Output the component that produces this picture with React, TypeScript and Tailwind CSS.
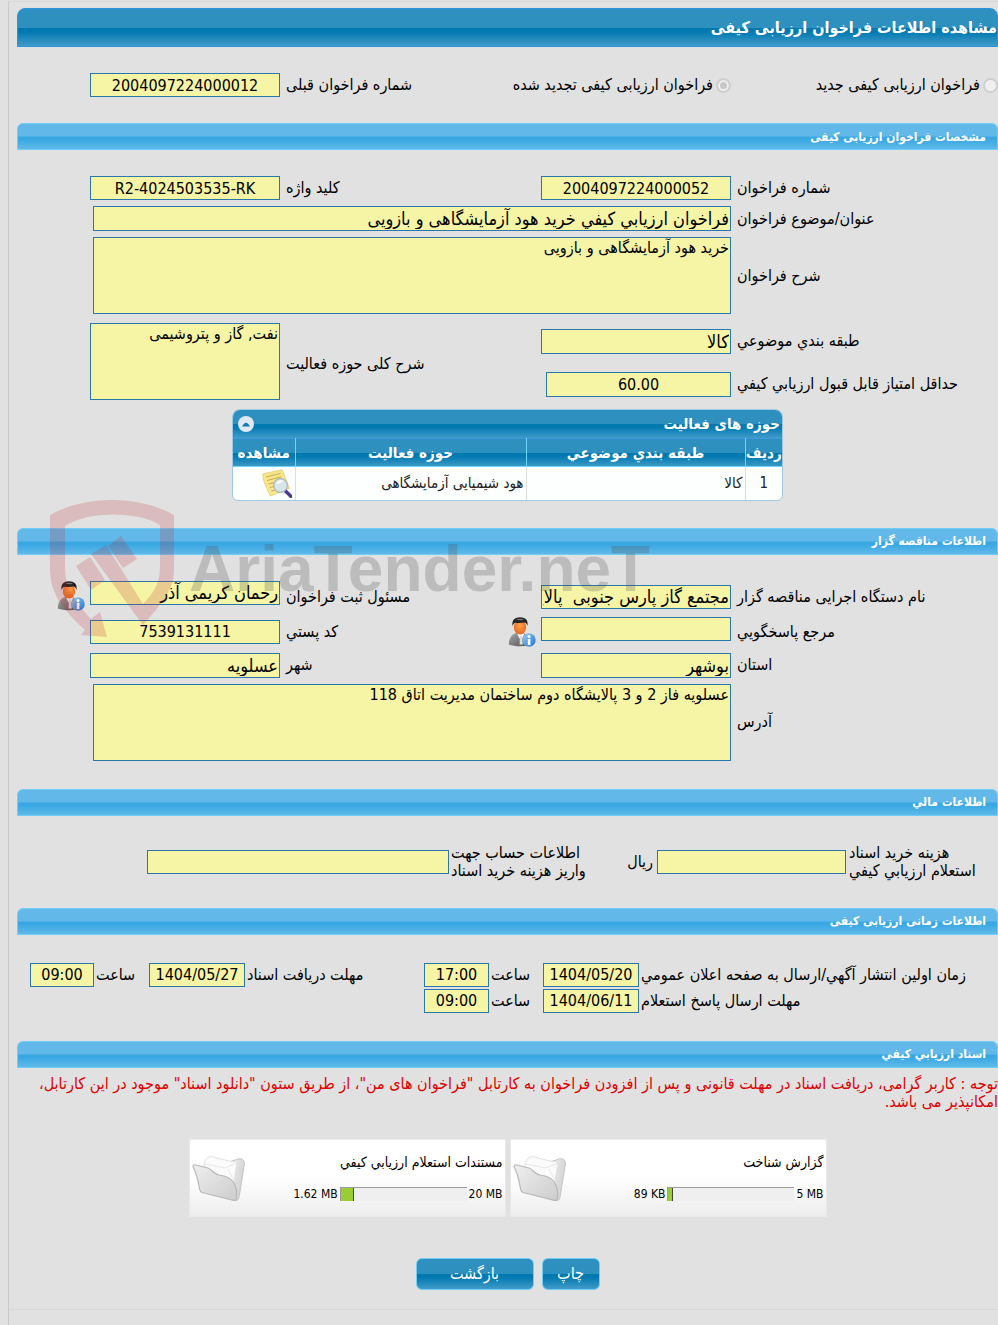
import { useId } from "react";
import type { ReactNode } from "react";

const FIELD =
  "block border border-[#2a78aa] bg-[#f6f4a5] px-px text-black outline-none";
const FORM_GRID =
  "grid grid-cols-[minmax(0,267fr)_190px_minmax(0,261fr)_190px_minmax(0,73fr)]";
const TIME_GRID =
  "grid grid-cols-[minmax(0,359fr)_96px_54px_65px_minmax(0,179fr)_96px_55px_64px_minmax(0,13fr)] items-center";
const DARK =
  "bg-[linear-gradient(#2e90bf_0%,#2e90bf_50%,#0078b0_51%,#0078b0_60%,#419bc7_100%)]";

function Field({
  id,
  value = "",
  center = false,
  tall = false,
  className = "",
}: {
  id: string;
  value?: string;
  center?: boolean;
  tall?: boolean;
  className?: string;
}) {
  return (
    <input
      id={id}
      readOnly
      defaultValue={value}
      className={`${FIELD} w-full leading-5 ${tall ? "h-[25px]" : "h-6"} ${center ? "text-center text-base" : "text-right text-lg"} ${className}`}
    />
  );
}

function Area({ id, value, className = "" }: { id: string; value: string; className?: string }) {
  return (
    <textarea
      id={id}
      readOnly
      defaultValue={value}
      className={`${FIELD} h-[77px] resize-none text-right text-base leading-5 ${className}`}
    />
  );
}

function Label({
  id,
  children,
  tight = false,
  className = "",
}: {
  id: string;
  children: ReactNode;
  tight?: boolean;
  className?: string;
}) {
  return (
    <label
      htmlFor={id}
      className={`block whitespace-nowrap text-left ${tight ? "pl-0.5" : "pl-1.5"} ${className}`}
    >
      {children}
    </label>
  );
}

function SectionBar({ children }: { children: ReactNode }) {
  return (
    <h2 className="flex h-[27px] items-center rounded-t-md border border-[#6fcdf6] bg-[linear-gradient(#62b9e9_0%,#62b9e9_48%,#38a7e2_52%,#38a7e2_60%,#60b9e9_100%)] pr-[11px] text-xs font-bold text-white">
      {children}
    </h2>
  );
}

function PersonIcon() {
  const g = useId();
  return (
    <svg viewBox="0 0 28 30" className="h-[30px] w-7 shrink-0" aria-hidden="true">
      <defs>
        <linearGradient id={`${g}s`} x1="0" y1="0" x2="1" y2="1">
          <stop offset="0" stopColor="#a5a5a5" />
          <stop offset="1" stopColor="#555" />
        </linearGradient>
        <radialGradient id={`${g}f`} cx="0.5" cy="0.4" r="0.6">
          <stop offset="0" stopColor="#ffa04d" />
          <stop offset="1" stopColor="#e56a1c" />
        </radialGradient>
        <linearGradient id={`${g}b`} x1="0" y1="0" x2="1" y2="1">
          <stop offset="0" stopColor="#9fd0f5" />
          <stop offset="1" stopColor="#1672cf" />
        </linearGradient>
      </defs>
      <path d="M.8 27.5C1 21 4 17 8.500 16h7c3 1 4.500 4 4.800 8v4.500c-6 1.200-14 1.200-19.500-1z" fill={`url(#${g}s)`} />
      <path d="M9 16.500l4 7.500 3.500-7.500z" fill="#fff" />
      <path d="M12 18.500h2l.8 9h-3.200z" fill="#ddd" />
      <ellipse cx="12" cy="10" rx="6.200" ry="7.500" fill={`url(#${g}f)`} />
      <path d="M4.500 9C3.600 3 7 .3 12 .3c5.200 0 8.500 2.700 7.500 8.700-.8-2.500-2-3.500-3.500-3.400-3 .5-6 .5-8.300.2C6 6 5.300 7 4.500 9z" fill="#242424" />
      <path d="M8 2.600c2.500-1.200 6-1 7.800.2-2.500.8-5.500.7-7.800-.2z" fill="#777" />
      <circle cx="21" cy="23" r="6.700" fill={`url(#${g}b)`} />
      <circle cx="21" cy="19.400" r="1.500" fill="#fff" />
      <path d="M19.800 21.900h2.600v6.200h-2.600z" fill="#fff" />
    </svg>
  );
}

function NoteSearchIcon() {
  return (
    <svg viewBox="0 0 30 29" className="h-[29px] w-[30px]" aria-hidden="true">
      <path d="M.8 5L20 .8l7.500 18.500L8.500 27C5 20 1 13 .8 5z" fill="#f7e68b" stroke="#e0cb6a" strokeWidth=".8" />
      <path d="M4 8l14.500-3.500M5 11.500l14.500-3.700M6.500 15l8-2M8 18.500l5-1.200M9.500 22l6-1.500" stroke="#c9b055" strokeWidth="1.100" fill="none" />
      <path d="M23.500 22l5.500 5.500" stroke="#4a3a94" strokeWidth="3.400" strokeLinecap="round" />
      <circle cx="18.500" cy="16.500" r="6.800" fill="#d5e6f2" fillOpacity=".9" stroke="#a9b6c4" strokeWidth="1.200" />
      <path d="M14 15c1-3 4-4.500 7-3.500-1 2-4 3.500-7 3.500z" fill="#fff" />
    </svg>
  );
}

function FolderIcon() {
  const g = useId();
  return (
    <svg viewBox="0 0 54 48" className="h-12 w-[54px] shrink-0" aria-hidden="true">
      <defs>
        <linearGradient id={`${g}a`} x1="0" y1="0" x2="1" y2="1">
          <stop offset="0" stopColor="#efefef" />
          <stop offset="1" stopColor="#cccccc" />
        </linearGradient>
        <linearGradient id={`${g}c`} x1="0" y1="0" x2="1" y2="0.400">
          <stop offset="0" stopColor="#fafafa" />
          <stop offset="1" stopColor="#d2d2d2" />
        </linearGradient>
      </defs>
      <path d="M34 9l12-4c4-1 6.500 1 6.500 4.500l-5.500 34c-.5 2.500-2 3.500-4 3L32 42z" fill={`url(#${g}c)`} stroke="#c6c6c6" />
      <path d="M12 13c0-5 2-9 5-10 3-1 5 0 8 1l12 3 8 1-4 26-24-4z" fill="#fbfbfb" stroke="#e2e2e2" />
      <path d="M13 10l20 4 12-5M36 15l6 12" stroke="#e8e8e8" fill="none" />
      <path d="M1 12.500c0-1.500 1-2 3-1.500l12 3c3 1 6 6 11 7 9 1 14 4 16.500 11 1.500 5 1.300 10 1 12.500-.3 1.500-1.500 2.300-3 1.800L10 38.500c-1.500-.6-2-1.500-2.300-3C6 26 5 20 1 12.500z" fill={`url(#${g}a)`} stroke="#b8b8b8" strokeWidth="1.200" />
    </svg>
  );
}

function Watermark() {
  return (
    <div dir="ltr" aria-hidden="true" className="pointer-events-none absolute left-[50px] top-[499px] flex">
      <svg viewBox="50 499 125 139" className="h-[139px] w-[125px] shrink-0" fill="#c02834" fillOpacity=".2">
        <path d="M50 515C85 495 139 495 174 515V568C174 586 168 597 143 625L91 554 106 545 143 604C156 590 160 582 160 566V525C137 511 88 511 65 526V567C65 586 72 598 91 619L100 612 107 637 81 635 85 630C58 605 50 590 50 568Z" />
        <path d="M76 566L90 557 105 580 91 590ZM108 546L121 536 137 559 123 568Z" />
      </svg>
      <span className="whitespace-nowrap pl-3.5 pt-5 font-['Liberation_Sans',sans-serif] text-[64px] font-bold leading-[100px] text-[#505050]/25">
        AriaTender.neT
      </span>
    </div>
  );
}

function FileCard({ title, max, used, level }: { title: string; max: string; used: string; level: number }) {
  return (
    <article className="flex h-[78px] w-[317px] items-start justify-between border border-[#e8e8e8] bg-[linear-gradient(#fff_50%,#ededed_100%)] px-0.5 text-xs text-black">
      <div className="pt-3">
        <h3 className="text-sm leading-5">{title}</h3>
        <div className="flex items-center gap-0.5 pt-3 leading-5">
          <span dir="ltr">{max}</span>
          <div dir="ltr" className="h-3.5 w-[127px] border-l border-t border-[#9a9a9a] bg-[#efefef]">
            <div className="h-full border-r border-[#444] bg-[#9acd32]" style={{ width: level }} />
          </div>
          <span dir="ltr">{used}</span>
        </div>
      </div>
      <div className="pt-3.5">
        <FolderIcon />
      </div>
    </article>
  );
}

function ActionButton({ children, className }: { children: ReactNode; className: string }) {
  return (
    <button type="button" className={`h-8 rounded-md border border-[#6fcdf6] text-base leading-5 text-white ${DARK} ${className}`}>
      {children}
    </button>
  );
}

export default function App() {
  const th = "border-l border-[#6fd6ff] p-0 text-center font-bold";
  const td = "border-l border-[#dedede] px-0.5 py-0";
  return (
    <div
      dir="rtl"
      className="relative min-h-screen overflow-x-hidden bg-[#e1e1e1] pl-2 pt-px font-['DejaVu_Sans_Condensed','DejaVu_Sans',sans-serif] text-base leading-[18px] text-black"
    >
      <div className="min-h-[1324px] border-l border-t border-l-[#c9c9c9] border-t-[#d9d9d9]">
        <main className="border-b border-[#d8d8d8] pb-[19px] pl-2 pt-1.5">
          <h1 className={`flex h-[39px] items-center rounded-t-lg border border-[#2b93e0] text-base font-bold text-white ${DARK}`}>
            مشاهده اطلاعات فراخوان ارزیابی کیفی
          </h1>

          <div className={`${FORM_GRID} items-center py-[26px]`}>
            <label className="flex items-center gap-[3px] whitespace-nowrap">
              <input type="radio" name="kind" disabled className="m-0 size-[15px] appearance-none rounded-full border-2 border-[#cfcfcf] bg-[#f0f0f0]" />
              فراخوان ارزیابی کیفی جدید
            </label>
            <div className="col-span-2 flex items-center justify-between">
              <label className="flex items-center gap-[3px] whitespace-nowrap">
                <input type="radio" name="kind" disabled defaultChecked className="m-0 size-[15px] appearance-none rounded-full border-2 border-[#cfcfcf] bg-[#c8c8c8] shadow-[inset_0_0_0_2px_#f0f0f0]" />
                فراخوان ارزیابی کیفی تجدید شده
              </label>
              <Label id="prev">شماره فراخوان قبلی</Label>
            </div>
            <Field id="prev" value="2004097224000012" center />
          </div>

          <SectionBar>مشخصات فراخوان ارزیابی کیفی</SectionBar>
          <section className="pt-[26px]">
            <div className={`${FORM_GRID} items-center`}>
              <Label id="num">شماره فراخوان</Label>
              <Field id="num" value="2004097224000052" center />
              <Label id="key">کلید واژه</Label>
              <Field id="key" value="R2-4024503535-RK" center />
            </div>
            <div className={`${FORM_GRID} items-center pt-1.5`}>
              <Label id="subject">عنوان/موضوع فراخوان</Label>
              <div className="col-span-3 pl-[3px]">
                <Field id="subject" value="فراخوان ارزيابي کيفي خرید هود آزمایشگاهی و بازویی" tall />
              </div>
            </div>
            <div className={`${FORM_GRID} items-center pt-1.5`}>
              <Label id="desc">شرح فراخوان</Label>
              <div className="col-span-3 pl-[3px]">
                <Area id="desc" value="خرید هود آزمایشگاهی و بازویی" className="w-full" />
              </div>
            </div>
            <div className={`${FORM_GRID} items-center pt-[9px]`}>
              <div className="col-span-2 grid grid-cols-[minmax(0,1fr)_190px] items-center gap-y-[18px] pt-0.5">
                <Label id="cat">طبقه بندي موضوعي</Label>
                <Field id="cat" value="کالا" tall />
                <Label id="score">حداقل امتیاز قابل قبول ارزیابي کیفي</Label>
                <div className="pl-[5px]">
                  <Field id="score" value="60.00" center tall />
                </div>
              </div>
              <Label id="scope" className="pt-1">شرح کلی حوزه فعالیت</Label>
              <Area id="scope" value="نفت, گاز و پتروشیمی" className="w-[190px]" />
            </div>

            <div className="mx-auto mt-[9px] w-[551px] overflow-hidden rounded-t-lg rounded-b-md border border-[#a0c8e4]">
              <div className={`flex h-7 items-center justify-between pl-[5px] pr-0.5 text-[15px] font-bold text-white ${DARK}`}>
                حوزه های فعالیت
                <button type="button" aria-label="بستن جدول" className="flex size-4 items-center justify-center rounded-full bg-[#dfe8f6]">
                  <svg viewBox="0 0 10 6" className="h-[5px] w-2" aria-hidden="true">
                    <path d="M0 5.500Q5-4 10 5.500z" fill="#1579ae" />
                  </svg>
                </button>
              </div>
              <table className="w-full table-fixed border-collapse">
                <colgroup>
                  <col className="w-[37px]" />
                  <col className="w-[219px]" />
                  <col className="w-[231px]" />
                  <col className="w-[62px]" />
                </colgroup>
                <thead className={`text-[15px] text-white ${DARK}`}>
                  <tr className="h-7 border-b border-t border-b-[#6fd6ff] border-t-[#3f98dd]">
                    <th className={th}>ردیف</th>
                    <th className={th}>طبقه بندي موضوعي</th>
                    <th className={th}>حوزه فعالیت</th>
                    <th className="p-0 text-center font-bold">مشاهده</th>
                  </tr>
                </thead>
                <tbody className="bg-[#fdfefe] text-[15px] text-[#222]">
                  <tr className="h-[33px]">
                    <td className={`${td} text-center`}>1</td>
                    <td className={td}>کالا</td>
                    <td className={td}>هود شیمیایی آزمایشگاهی</td>
                    <td className="px-[3px] py-0">
                      <button type="button" aria-label="مشاهده" className="block">
                        <NoteSearchIcon />
                      </button>
                    </td>
                  </tr>
                </tbody>
              </table>
            </div>
          </section>

          <div className="pt-[27px]">
            <SectionBar>اطلاعات مناقصه گزار</SectionBar>
          </div>
          <section className="flex flex-col gap-1 pt-[26px]">
            <div className={`${FORM_GRID} h-8 items-center`}>
              <Label id="org">نام دستگاه اجرایی مناقصه گزار</Label>
              <Field id="org" value="مجتمع گاز پارس جنوبی  پالایشگاه دوم" />
              <Label id="owner">مسئول ثبت فراخوان</Label>
              <Field id="owner" value="رحمان کریمی آذر" className="self-start" />
              <div className="flex self-start pr-[5px]">
                <PersonIcon />
              </div>
            </div>
            <div className={`${FORM_GRID} items-center`}>
              <Label id="contact">مرجع پاسخگويي</Label>
              <Field id="contact" className="self-start" />
              <div className="flex items-center justify-between pr-[5px]">
                <PersonIcon />
                <Label id="zip">کد پستي</Label>
              </div>
              <Field id="zip" value="7539131111" center />
            </div>
            <div className={`${FORM_GRID} items-center pt-0.5`}>
              <Label id="state">استان</Label>
              <Field id="state" value="بوشهر" tall />
              <Label id="city">شهر</Label>
              <Field id="city" value="عسلویه" tall />
            </div>
            <div className={`${FORM_GRID} items-center pt-0.5`}>
              <Label id="address">آدرس</Label>
              <div className="col-span-3 pl-[3px]">
                <Area id="address" value="عسلویه فاز 2 و 3 پالایشگاه دوم ساختمان مدیریت اتاق 118" className="w-full" />
              </div>
            </div>
          </section>

          <div className="pt-7">
            <SectionBar>اطلاعات مالي</SectionBar>
          </div>
          <section className="grid grid-cols-[minmax(0,152fr)_189px_minmax(0,208fr)_302px_minmax(0,130fr)] items-center py-7">
            <label htmlFor="fee" className="whitespace-nowrap pl-[3px] text-left">
              هزینه خرید اسناد
              <br />
              استعلام ارزیابي کیفي
            </label>
            <Field id="fee" />
            <div className="flex items-center justify-between whitespace-nowrap pr-1">
              <span>ریال</span>
              <label htmlFor="account" className="pl-0.5 text-left">
                اطلاعات حساب جهت
                <br />
                واریز هزینه خرید اسناد
              </label>
            </div>
            <Field id="account" />
          </section>

          <SectionBar>اطلاعات زمانی ارزیابی کیفی</SectionBar>
          <section className="flex flex-col gap-0.5 py-7">
            <div className={TIME_GRID}>
              <Label id="pub" tight>زمان اولین انتشار آگهي/ارسال به صفحه اعلان عمومي</Label>
              <Field id="pub" value="1404/05/20" center />
              <Label id="pubt" tight>ساعت</Label>
              <Field id="pubt" value="17:00" center />
              <Label id="recv" tight>مهلت دریافت اسناد</Label>
              <Field id="recv" value="1404/05/27" center />
              <Label id="recvt" tight>ساعت</Label>
              <Field id="recvt" value="09:00" center />
            </div>
            <div className={TIME_GRID}>
              <Label id="ans" tight>مهلت ارسال پاسخ استعلام</Label>
              <Field id="ans" value="1404/06/11" center />
              <Label id="anst" tight>ساعت</Label>
              <Field id="anst" value="09:00" center />
            </div>
          </section>

          <SectionBar>اسناد ارزیابي کیفي</SectionBar>
          <p className="pl-5 pt-[7px] text-[#dd0000]">
            توجه : کاربر گرامی، دریافت اسناد در مهلت قانونی و پس از افزودن فراخوان به کارتابل "فراخوان های من"، از طریق ستون "دانلود اسناد" موجود در این کارتابل، امکانپذیر می باشد.
          </p>
          <div className="flex justify-center gap-1 pt-7">
            <FileCard title="گزارش شناخت" max="5 MB" used="89 KB" level={5} />
            <FileCard title="مستندات استعلام ارزیابي کیفي" max="20 MB" used="1.62 MB" level={13} />
          </div>
          <div className="flex justify-center gap-2 pt-[41px]">
            <ActionButton className="w-[58px]">چاپ</ActionButton>
            <ActionButton className="w-[118px]">بازگشت</ActionButton>
          </div>
        </main>
      </div>
      <Watermark />
    </div>
  );
}
